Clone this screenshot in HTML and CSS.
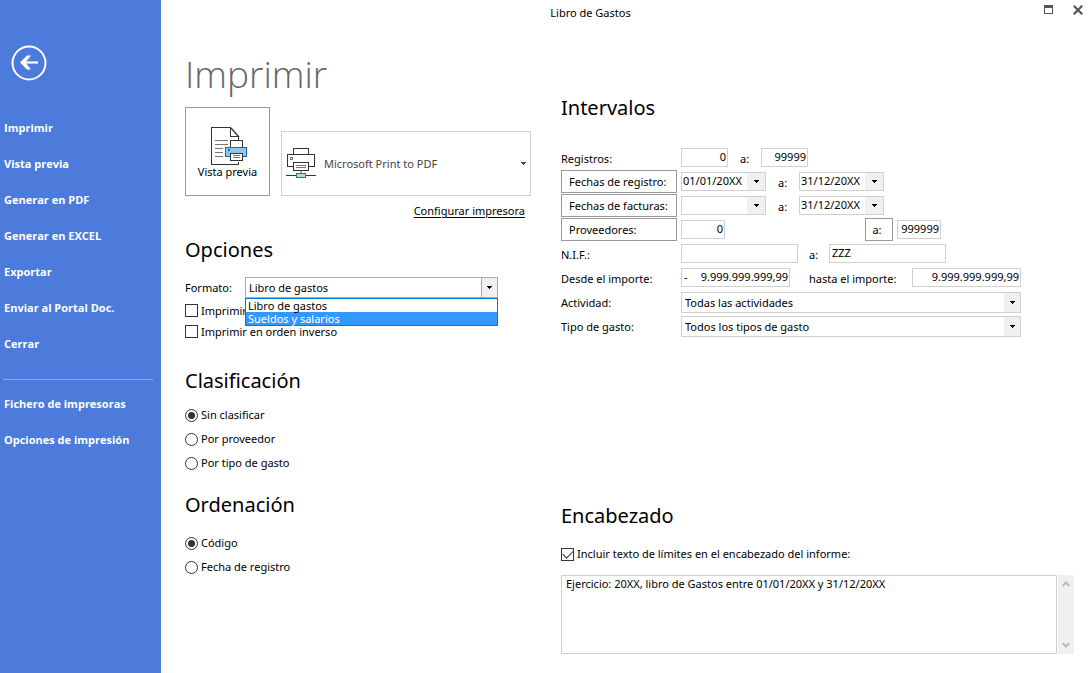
FILE: index.html
```html
<!DOCTYPE html>
<html lang="es">
<head>
<meta charset="utf-8">
<meta name="viewport" content="width=device-width, initial-scale=1">
<title>Libro de Gastos</title>
<link rel="stylesheet" href="styles.css">
</head>
<body>
<svg class="sprites" aria-hidden="true">
  <symbol id="caret" viewBox="0 0 5 3"><path d="M0 0h5v1H4v1H3v1H2V2H1V1H0z" fill="currentColor"/></symbol>
</svg>
<div class="app">
  <nav class="sidebar" aria-label="Menú">
    <button class="back" type="button" aria-label="Volver">
      <svg width="36" height="36" viewBox="0 0 36 36" fill="none" stroke="#fff"><circle cx="18" cy="18" r="16.5" stroke-width="2"/><path d="M27 17.500H12" stroke-width="2.200"/><path d="M9 17.500l7-7h4l-5.500 7 5.500 7h-4z" fill="#fff" stroke="none"/></svg>
    </button>
    <ul class="menu">
      <li><a href="#imprimir">Imprimir</a></li>
      <li><a href="#vista">Vista previa</a></li>
      <li><a href="#pdf">Generar en PDF</a></li>
      <li><a href="#excel">Generar en EXCEL</a></li>
      <li><a href="#exportar">Exportar</a></li>
      <li><a href="#portal">Enviar al Portal Doc.</a></li>
      <li><a href="#cerrar">Cerrar</a></li>
    </ul>
    <ul class="menu menu-extra">
      <li><a href="#impresoras">Fichero de impresoras</a></li>
      <li><a href="#opciones">Opciones de impresión</a></li>
    </ul>
  </nav>
  <div class="window">
    <header class="titlebar">
      <span class="caption">Libro de Gastos</span>
      <div class="controls">
        <button type="button" aria-label="Maximizar"><svg width="9" height="9" viewBox="0 0 9 9"><path d="M0 0h9v9H0zM1 3v5h7V3z" fill="#555" fill-rule="evenodd"/></svg></button>
        <button type="button" aria-label="Cerrar"><svg width="10" height="10" viewBox="0 0 10 10" stroke="#555" stroke-width="2.2"><path d="M.8.8l8.4 8.4M9.200.8L.8 9.200"/></svg></button>
      </div>
    </header>
    <main class="content">
      <div class="column">
        <h1>Imprimir</h1>
        <div class="print-bar">
          <button class="preview" type="button">
            <svg width="37" height="39" viewBox="0 0 37 39" fill="none" shape-rendering="crispEdges">
              <path d="M.5.5h19l8 9v28H.5z" fill="#fff" stroke="none"/>
              <path d="M28 37.500H.5V.5H20M19.500.5v9H28M27.500 9v4" stroke="#333"/>
              <path d="M20 1l8 9" stroke="#333" stroke-width="1.300" shape-rendering="auto"/>
              <path d="M27.500 35v3" stroke="#333"/>
              <path d="M4 13.500h13M4 17.500h13M4 21.500h8M4 25.500h8M4 29.500h8" stroke="#777"/>
              <path d="M19.500 20v-6.500h12V20" fill="#fff" stroke="#333"/>
              <path d="M14.500 20.500h21v9h-21z" fill="#92c5ee" stroke="#0e6cb8"/>
              <path d="M17 22h2v2h-2z" fill="#0e6cb8"/>
              <path d="M19.500 26.500h12v7h-12z" fill="#fff" stroke="#333"/>
              <path d="M22 28.500h7M22 30.500h7" stroke="#777"/>
            </svg>
            <span>Vista previa</span>
          </button>
          <button class="printer" type="button">
            <svg width="30" height="31" viewBox="0 0 30 31" fill="none" shape-rendering="crispEdges">
              <path d="M7.500 6V.5h15V6" stroke="#333"/>
              <path d="M7 18.500H1.500v-12h27v12H23" stroke="#333"/>
              <path d="M4.500 9.500h2v2h-2z" stroke="#777"/>
              <path d="M7.500 14.500h15v8h-15z" fill="#fff" stroke="#333"/>
              <path d="M10 17.500h10M10 19.500h10" stroke="#777"/>
              <path d="M15 23v3" stroke="#aaa" stroke-width="2"/>
              <path d="M0 27.500h10M20 27.500h10" stroke="#333"/>
              <path d="M10.500 25.500h9v4h-9z" fill="#b5dfc0" stroke="#0b9444"/>
            </svg>
            <span class="printer-name">Microsoft Print to PDF</span>
            <svg class="caret" width="5" height="3"><use href="#caret"/></svg>
          </button>
        </div>
        <a class="configure" href="#configurar">Configurar impresora</a>

        <section>
          <h2>Opciones</h2>
          <div class="format">
            <label for="formato">Formato:</label>
            <div class="combo combo-open">
              <select id="formato"><option>Libro de gastos</option><option>Sueldos y salarios</option></select>
              <span class="arrow"><svg width="5" height="3"><use href="#caret"/></svg></span>
              <ul class="dropdown" role="listbox" aria-label="Formato">
                <li role="option" aria-selected="false">Libro de gastos</li>
                <li role="option" aria-selected="true" class="active">Sueldos y salarios</li>
              </ul>
            </div>
          </div>
          <label class="choice check"><input type="checkbox"><span>Imprimir</span></label>
          <label class="choice check"><input type="checkbox"><span>Imprimir en orden inverso</span></label>
        </section>

        <section class="sorting">
          <h2>Clasificación</h2>
          <label class="choice"><input type="radio" name="clasificacion" checked><span>Sin clasificar</span></label>
          <label class="choice"><input type="radio" name="clasificacion"><span>Por proveedor</span></label>
          <label class="choice"><input type="radio" name="clasificacion"><span>Por tipo de gasto</span></label>
        </section>

        <section class="ordering">
          <h2>Ordenación</h2>
          <label class="choice"><input type="radio" name="ordenacion" checked><span>Código</span></label>
          <label class="choice"><input type="radio" name="ordenacion"><span>Fecha de registro</span></label>
        </section>
      </div>

      <div class="column ranges">
        <section>
          <h2>Intervalos</h2>
          <div class="rows">
            <div class="row">
              <label class="name" for="reg1">Registros:</label>
              <input class="num w-reg" id="reg1" value="0">
              <label class="to" for="reg2">a:</label>
              <input class="num w-reg" id="reg2" value="99999">
            </div>
            <div class="row">
              <button class="name-button" type="button" id="fr">Fechas de registro:</button>
              <div class="date"><input id="fr1" aria-labelledby="fr" value="01/01/20XX"><button type="button" aria-label="Calendario"><svg width="5" height="3"><use href="#caret"/></svg></button></div>
              <label class="to" for="fr2">a:</label>
              <div class="date"><input id="fr2" value="31/12/20XX"><button type="button" aria-label="Calendario"><svg width="5" height="3"><use href="#caret"/></svg></button></div>
            </div>
            <div class="row">
              <button class="name-button" type="button" id="ff">Fechas de facturas:</button>
              <div class="date"><input id="ff1" aria-labelledby="ff" value=""><button type="button" aria-label="Calendario"><svg width="5" height="3"><use href="#caret"/></svg></button></div>
              <label class="to" for="ff2">a:</label>
              <div class="date"><input id="ff2" value="31/12/20XX"><button type="button" aria-label="Calendario"><svg width="5" height="3"><use href="#caret"/></svg></button></div>
            </div>
            <div class="row">
              <button class="name-button" type="button" id="pr">Proveedores:</button>
              <input class="num w-prov" aria-labelledby="pr" value="0">
              <button class="to-button" type="button" id="pra">a:</button>
              <input class="num w-prov" aria-labelledby="pra" value="999999">
            </div>
            <div class="row">
              <label class="name" for="nif1">N.I.F.:</label>
              <input class="w-nif" id="nif1" value="">
              <label class="to to-nif" for="nif2">a:</label>
              <input class="w-nif" id="nif2" value="ZZZ">
            </div>
            <div class="row">
              <label class="name" for="imp1">Desde el importe:</label>
              <div class="signed"><span>-</span><input class="num" id="imp1" value="9.999.999.999,99"></div>
              <label class="until" for="imp2">hasta el importe:</label>
              <input class="num w-imp" id="imp2" value="9.999.999.999,99">
            </div>
            <div class="row">
              <label class="name" for="act">Actividad:</label>
              <div class="combo"><select id="act"><option>Todas las actividades</option></select><span class="arrow"><svg width="5" height="3"><use href="#caret"/></svg></span></div>
            </div>
            <div class="row">
              <label class="name" for="tipo">Tipo de gasto:</label>
              <div class="combo"><select id="tipo"><option>Todos los tipos de gasto</option></select><span class="arrow"><svg width="5" height="3"><use href="#caret"/></svg></span></div>
            </div>
          </div>
        </section>

        <section class="heading-text">
          <h2>Encabezado</h2>
          <label class="choice"><input type="checkbox" checked><span>Incluir texto de límites en el encabezado del informe:</span></label>
          <div class="memo">
            <textarea aria-label="Texto del encabezado">Ejercicio: 20XX, libro de Gastos entre 01/01/20XX y 31/12/20XX</textarea>
            <div class="scroll">
              <button type="button" aria-label="Subir"><svg width="8" height="6" viewBox="0 0 8 6" fill="none" stroke="#bbb" stroke-width="2"><path d="M.7 5L4 1.500 7.300 5"/></svg></button>
              <button type="button" aria-label="Bajar"><svg width="8" height="6" viewBox="0 0 8 6" fill="none" stroke="#bbb" stroke-width="2"><path d="M.7 1L4 4.500 7.300 1"/></svg></button>
            </div>
          </div>
        </section>
      </div>
    </main>
  </div>
</div>
</body>
</html>
```

FILE: styles.css
```css
* { box-sizing: border-box; }
body {
  margin: 0;
  background: #fff;
  color: #000;
  font: 11px/16px "Noto Sans", "Open Sans", sans-serif;
}
button, input, select, textarea { font: inherit; color: inherit; margin: 0; border-radius: 0; }
button { background: none; border: 0; padding: 0; }
ul { list-style: none; margin: 0; padding: 0; }
svg { display: block; flex: none; }
.sprites { width: 0; height: 0; position: absolute; }
.app { display: flex; min-height: 100vh; }

.sidebar { flex: none; width: 161px; background: #4c7bdb; padding-top: 45px; color: #fff; }
.back { display: block; margin: 0 0 29px 11px; }
.menu a {
  display: flex;
  align-items: center;
  height: 36px;
  padding-left: 4px;
  color: #fff;
  font: 700 11px/16px "Open Sans", "Noto Sans", sans-serif;
  text-decoration: none;
}
.menu-extra { margin: 17px 8px 0 3px; border-top: 1px solid #86a6e8; padding-top: 6px; }
.menu-extra a { padding-left: 1px; white-space: nowrap; }

.window { flex: 1; min-width: 0; }
.titlebar { display: flex; height: 26px; }
.caption { flex: 1; text-align: center; padding-top: 5px; }
.controls { display: flex; gap: 20px; width: 72px; padding: 5px 9px 0 24px; align-items: flex-start; }
.content { display: grid; grid-template-columns: 376px 1fr; padding: 0 18px 19px 24px; }

h1 {
  margin: 24px 0 9px;
  font: 300 37px/48px "Open Sans", "Noto Sans", sans-serif;
  color: #666;
}
h2 { margin: 0; font: 400 20px/28px "Noto Sans", "Open Sans", sans-serif; }

.print-bar { display: flex; align-items: flex-end; gap: 11px; }
.preview {
  display: flex;
  flex-direction: column;
  align-items: center;
  width: 85px;
  height: 89px;
  padding-top: 19px;
  border: 1px solid #999;
  line-height: 12px;
}
.preview svg { margin-left: 4px; }
.printer {
  display: flex;
  align-items: center;
  width: 250px;
  height: 65px;
  padding: 0 4px;
  border: 1px solid #d0d0d0;
  color: #444;
  text-align: left;
}
.printer-name { flex: 1; padding-left: 8px; }
.configure {
  display: block;
  width: 340px;
  margin: 7px 0 17px;
  color: #000;
  text-align: right;
  text-underline-offset: 2px;
}

.format { display: flex; align-items: center; width: 313px; margin: 13px 0 2px; }
.format label { width: 60px; }
.combo { position: relative; display: grid; flex: 1; height: 21px; }
.combo select {
  grid-area: 1 / 1;
  appearance: none;
  min-width: 0;
  padding: 0 20px 0 3px;
  border: 1px solid #d0d0d0;
  background: #fff;
}
.combo .arrow {
  grid-area: 1 / 1;
  justify-self: end;
  display: flex;
  align-items: center;
  justify-content: center;
  width: 16px;
  margin: 1px;
  background: #f0f0f0;
  pointer-events: none;
}
.combo-open select { border-color: #aaa; }
.combo-open .arrow { border-left: 1px solid #aaa; }
.dropdown {
  position: absolute;
  z-index: 1;
  top: 21px;
  left: 0;
  right: 0;
  border: 1px solid #0078d7;
  background: #fff;
  line-height: 13px;
}
.dropdown li { padding-left: 2px; }
.dropdown .active { background: #3399ff; color: #fff; }

.choice { display: flex; align-items: center; gap: 3px; height: 24px; }
.choice.check { height: 21px; line-height: 12px; }
.choice input {
  appearance: none;
  display: grid;
  place-content: center;
  width: 13px;
  height: 13px;
  border: 1px solid #333;
  background: #fff;
}
.choice input[type="radio"] { border-radius: 50%; }
.choice input[type="radio"]:checked::before { content: ""; width: 7px; height: 7px; border-radius: 50%; background: #333; }
.choice input[type="checkbox"]:checked::before {
  content: "";
  width: 9px;
  height: 5px;
  border: solid #333;
  border-width: 0 0 1px 1px;
  transform: translateY(-1px) rotate(-45deg);
}
.sorting { margin-top: 25px; }
.sorting h2, .ordering h2 { margin-bottom: 8px; }
.ordering { margin-top: 16px; }
.ordering h2 { margin-bottom: 12px; }

.ranges { padding-top: 68px; }
.ranges h2 { margin-bottom: 24px; }
.row { display: flex; align-items: flex-start; height: 24px; }
.row input { height: 19px; padding: 0 3px 2px 2px; border: 1px solid #d0d0d0; background: #fff; margin-top: 2px; }
.row .num { text-align: right; padding-right: 1px; }
.name { width: 120px; padding-top: 5px; }
.name-button, .to-button { height: 23px; border: 1px solid #999; background: #fff; }
.name-button { width: 116px; margin-right: 4px; padding-left: 7px; text-align: left; }
.to-button { width: 28px; margin: 0 4px 0 140px; padding-right: 4px; }
.to { width: 33px; padding: 5px 0 0 12px; }
.to-nif { width: 31px; padding-left: 11px; }
.until { width: 122px; padding: 5px 0 0 19px; }
.row .w-reg { width: 47px; }
.row .w-prov { width: 44px; }
.row .w-nif { width: 117px; }
.row .w-imp { width: 109px; }
.date, .signed { display: flex; height: 19px; margin-top: 2px; border: 1px solid #d0d0d0; background: #fff; }
.date { width: 85px; }
.signed { width: 109px; padding-left: 2px; }
.row .date input, .row .signed input { flex: 1; min-width: 0; height: 17px; margin: 0; border: 0; padding-right: 0; }
.row .date input { padding-left: 1px; }
.row .signed input { padding-right: 1px; }
.date button { display: grid; place-content: center; width: 18px; background: #f0f0f0; }
.row .combo { flex: 0 1 340px; margin-top: 2px; }

.heading-text { margin-top: 164px; }
.ranges .heading-text h2 { margin-bottom: 12px; }
.memo { display: flex; gap: 1px; margin-top: 9px; }
.memo textarea {
  flex: 1;
  height: 79px;
  padding: 0 4px;
  border: 1px solid #d0d0d0;
  resize: none;
  overflow: hidden;
}
.scroll { display: flex; flex-direction: column; justify-content: space-between; align-items: center; width: 16px; padding: 6px 0; background: #f0f0f0; }
```
